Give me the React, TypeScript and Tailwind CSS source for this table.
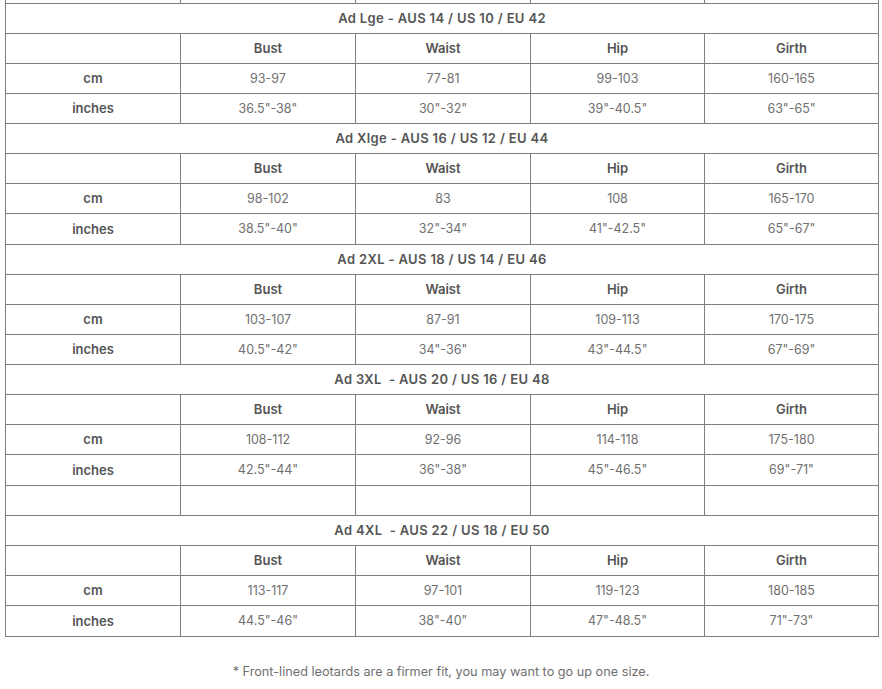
import React from "react";

type Block = { title: string; cm: string[]; inches: string[] };

const blocks: Block[] = [
  { title: "Ad Lge - AUS 14 / US 10 / EU 42", cm: ["93-97", "77-81", "99-103", "160-165"], inches: ['36.5"-38"', '30"-32"', '39"-40.5"', '63"-65"'] },
  { title: "Ad Xlge - AUS 16 / US 12 / EU 44", cm: ["98-102", "83", "108", "165-170"], inches: ['38.5"-40"', '32"-34"', '41"-42.5"', '65"-67"'] },
  { title: "Ad 2XL - AUS 18 / US 14 / EU 46", cm: ["103-107", "87-91", "109-113", "170-175"], inches: ['40.5"-42"', '34"-36"', '43"-44.5"', '67"-69"'] },
  { title: "Ad 3XL  - AUS 20 / US 16 / EU 48", cm: ["108-112", "92-96", "114-118", "175-180"], inches: ['42.5"-44"', '36"-38"', '45"-46.5"', '69"-71"'] },
  { title: "Ad 4XL  - AUS 22 / US 18 / EU 50", cm: ["113-117", "97-101", "119-123", "180-185"], inches: ['44.5"-46"', '38"-40"', '47"-48.5"', '71"-73"'] },
];

const widths = ["w-[175px]", "w-[175px]", "w-[175px]", "w-[174px]", "w-[174px]"];

function Row({ cells, h, boldFirst, boldAll }: { cells: string[]; h: string; boldFirst?: boolean; boldAll?: boolean }) {
  return (
    <div className={`flex border-b border-[#7f7f7f] ${h}`}>
      {cells.map((c, i) => (
        <div
          key={i}
          className={`${widths[i]} shrink-0 border-r border-[#7f7f7f] flex items-center justify-center pt-px ${
            boldAll || (boldFirst && i === 0)
              ? "font-semibold text-[13px] text-[#555555]"
              : "font-normal text-[12.5px] text-[#707070]"
          }`}
        >
          {c}
        </div>
      ))}
    </div>
  );
}

function Title({ text, h }: { text: string; h: string }) {
  return (
    <div
      className={`flex items-center justify-center border-b border-r border-[#7f7f7f] font-semibold text-[13px] tracking-[0.35px] text-[#555555] whitespace-pre ${h}`}
    >
      {text}
    </div>
  );
}

export default function App() {
  const tall = (bi: number, row: number) => {
    if ((bi === 1 || bi === 3 || bi === 4) && row === 3) return "h-[31px]";
    return "h-[30px]";
  };
  return (
    <div className="w-[882px] h-[689px] bg-white font-['Inter',sans-serif] overflow-hidden">
      <div className="ml-[5px] w-[874px] border-l border-[#7f7f7f]">
        <Row cells={["", "", "", "", ""]} h="h-[4px]" />
        {blocks.map((b, bi) => (
          <React.Fragment key={bi}>
            <Title text={b.title} h="h-[30px]" />
            <Row cells={["", "Bust", "Waist", "Hip", "Girth"]} h="h-[30px]" boldAll />
            <Row cells={["cm", ...b.cm]} h={tall(bi, 2)} boldFirst />
            <Row cells={["inches", ...b.inches]} h={tall(bi, 3)} boldFirst />
            {bi === 3 && <Row cells={["", "", "", "", ""]} h="h-[30px]" />}
          </React.Fragment>
        ))}
      </div>
      <div className="mt-[25px] text-center text-[#707070] text-[12.7px]">
        * Front-lined leotards are a firmer fit, you may want to go up one size.
      </div>
    </div>
  );
}
